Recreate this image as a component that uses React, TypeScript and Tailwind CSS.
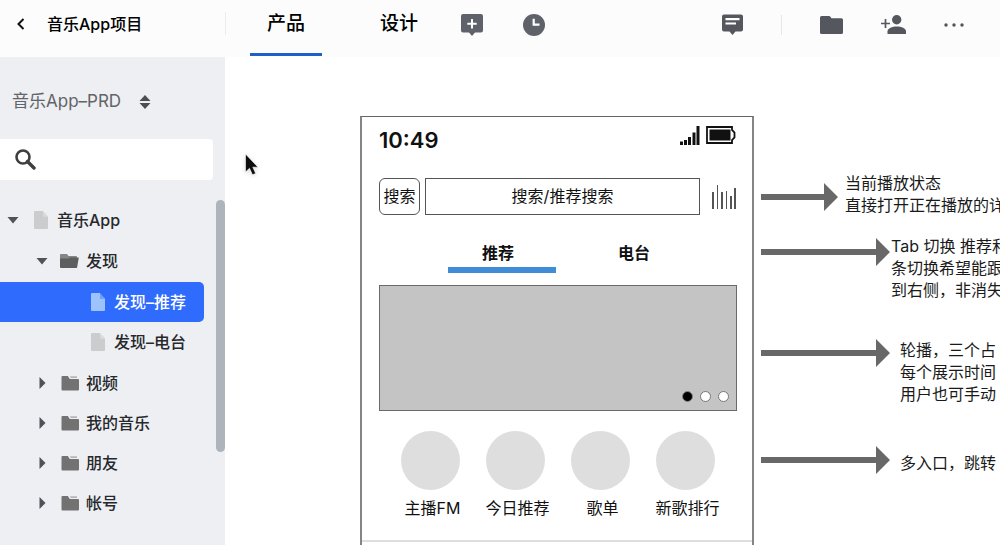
import React from "react";

type IconProps = { className?: string };

const FileIcon = ({ className }: IconProps) => (
  <svg viewBox="0 0 14 18" className={className} aria-hidden="true">
    <path d="M1 0h8v5.500h5V17a1 1 0 0 1-1 1H1a1 1 0 0 1-1-1V1a1 1 0 0 1 1-1z" fill="currentColor" />
    <path d="M9 0l5 5.500H9z" fill="currentColor" opacity="0.6" />
  </svg>
);

const FolderIcon = ({ className }: IconProps) => (
  <svg viewBox="0 0 18 16" className={className} aria-hidden="true">
    <path d="M1.500 1h5.300l2 3H17a1 1 0 0 1 1 1v9.500a1 1 0 0 1-1 1H1.500a1 1 0 0 1-1-1V2a1 1 0 0 1 1-1z" fill="#727272" />
    <path d="M8.800 1.200H16V3H9.800z" fill="#b5b6b8" />
  </svg>
);

const OpenFolderIcon = ({ className }: IconProps) => (
  <svg viewBox="0 0 19 16" className={className} aria-hidden="true">
    <path d="M1 1h6l1.500 2H16a1 1 0 0 1 1 1v6H0V2a1 1 0 0 1 1-1z" fill="#858585" />
    <path d="M0 5.500h8.500L10 4.500h8.800L17.200 14a1 1 0 0 1-1 .9H1a1 1 0 0 1-1-1z" fill="#5e5e5e" />
  </svg>
);

const Caret = ({ open }: { open: boolean }) => (
  <svg viewBox="0 0 12 12" className="size-3 shrink-0" aria-hidden="true">
    <path d={open ? "M.5 3h11L6 9.500z" : "M3.500 0v12L9.500 6z"} fill="#4f5256" />
  </svg>
);

type Node = { label: string; kind: "file" | "folder"; active?: boolean; open?: boolean; children?: Node[] };

const tree: Node[] = [
  {
    label: "音乐App",
    kind: "file",
    open: true,
    children: [
      {
        label: "发现",
        kind: "folder",
        open: true,
        children: [
          { label: "发现–推荐", kind: "file", active: true },
          { label: "发现–电台", kind: "file" },
        ],
      },
      { label: "视频", kind: "folder" },
      { label: "我的音乐", kind: "folder" },
      { label: "朋友", kind: "folder" },
      { label: "帐号", kind: "folder" },
    ],
  },
];

const indents = ["pl-[7px]", "pl-9", "pl-16"];

function Branch({ nodes, depth }: { nodes: Node[]; depth: number }) {
  return (
    <ul className={depth > 0 ? "my-px" : ""}>
      {nodes.map((n) => (
        <li key={n.label}>
          <button
            type="button"
            className={`flex h-10 w-full items-center rounded-r-[5px] text-left font-medium ${indents[depth]} ${
              n.active ? "bg-[#2f6bfd] text-white" : "text-[#26282c]"
            }`}
          >
            {depth < 2 ? <Caret open={!!n.open} /> : <span className="w-3" />}
            <span className="ml-3 mr-[7px] flex w-[19px] shrink-0 justify-center">
              {n.kind === "file" ? (
                <FileIcon className={n.active ? "h-[18px] w-3.5 text-[#9cc3fb]" : "h-[18px] w-3.5 text-[#cbcccd]"} />
              ) : n.open ? (
                <OpenFolderIcon className="h-4 w-[19px]" />
              ) : (
                <FolderIcon className="h-4 w-[18px]" />
              )}
            </span>
            <span className="whitespace-nowrap">{n.label}</span>
          </button>
          {n.children && <Branch nodes={n.children} depth={depth + 1} />}
        </li>
      ))}
    </ul>
  );
}

function Header() {
  return (
    <header className="flex h-[57px] shrink-0 items-center bg-[#fcfcfc]">
      <div className="mb-2.5 flex h-[23px] w-[226px] shrink-0 items-center border-r border-[#ececec]">
        <button type="button" aria-label="返回" className="ml-4 flex w-[31px]">
          <svg viewBox="0 0 10 12" className="h-3 w-2.5" aria-hidden="true">
            <path d="M7.500 1L2.500 6l5 5" fill="none" stroke="#111" strokeWidth="2" />
          </svg>
        </button>
        <h1 className="font-medium text-black">音乐App项目</h1>
      </div>
      <nav className="ml-6 flex items-stretch self-stretch text-[19px] font-medium text-black">
        <a href="#product" className="mb-px flex w-[72px] items-center justify-center border-b-[3px] border-[#1f5fc9] pb-1">
          产品
        </a>
        <a href="#design" className="mb-px ml-[41px] flex w-[72px] items-center justify-center border-b-[3px] border-transparent pb-1">
          设计
        </a>
      </nav>
      <div className="mb-2 ml-[26px] flex items-center gap-10">
        <button type="button" aria-label="添加批注">
          <svg viewBox="0 0 22 22" className="size-[22px]" aria-hidden="true">
            <path d="M2 0h18a2 2 0 0 1 2 2v14.500a2 2 0 0 1-2 2h-6L11 22l-3-3.500H2a2 2 0 0 1-2-2V2a2 2 0 0 1 2-2z" fill="#5f626b" />
            <path d="M11 5v9.400M6.300 9.700h9.400" stroke="#fff" strokeWidth="2" />
          </svg>
        </button>
        <button type="button" aria-label="历史记录">
          <svg viewBox="0 0 22 22" className="size-[22px]" aria-hidden="true">
            <circle cx="11" cy="11" r="11" fill="#5f626b" />
            <path d="M10.700 4.800v5.900h5.800" fill="none" stroke="#fff" strokeWidth="2.200" />
          </svg>
        </button>
      </div>
      <div className="mb-2 ml-auto flex items-center gap-[38px] pr-9">
        <button type="button" aria-label="评论">
          <svg viewBox="0 0 21 21" className="size-[21px]" aria-hidden="true">
            <path d="M2 .5h17a2 2 0 0 1 2 2V15.500a2 2 0 0 1-2 2h-5.500L10.500 21l-3-3.500H2a2 2 0 0 1-2-2v-13a2 2 0 0 1 2-2z" fill="#54585e" />
            <path d="M3.500 5.200h14M3.500 9.500h10.500" stroke="#fff" strokeWidth="2.200" />
          </svg>
        </button>
        <span className="h-5 w-px bg-[#e6e6e6]" />
        <button type="button" aria-label="文件夹">
          <svg viewBox="0 0 23 18" className="h-[18px] w-[23px]" aria-hidden="true">
            <path d="M1.500 0h7.500q1 0 1.600.9l.9 1.300H21.500A1.500 1.500 0 0 1 23 3.700v12.800a1.500 1.500 0 0 1-1.500 1.500h-20A1.500 1.500 0 0 1 0 16.500v-15A1.500 1.500 0 0 1 1.500 0z" fill="#54585e" />
          </svg>
        </button>
        <button type="button" aria-label="添加成员">
          <svg viewBox="0 0 25 19" className="h-[19px] w-[25px]" aria-hidden="true">
            <circle cx="15.700" cy="4.700" r="4.700" fill="#54585e" />
            <path d="M6.500 19v-2.500c0-3.200 4.700-5 9.300-5s9.200 1.800 9.200 5V19z" fill="#54585e" />
            <path d="M4.500 4v9M0 8.500h9" stroke="#54585e" strokeWidth="1.700" />
          </svg>
        </button>
        <button type="button" aria-label="更多">
          <svg viewBox="0 0 20 6" className="h-1.5 w-5" aria-hidden="true">
            <g fill="#505357">
              <circle cx="2" cy="3" r="1.700" />
              <circle cx="10" cy="3" r="1.700" />
              <circle cx="18" cy="3" r="1.700" />
            </g>
          </svg>
        </button>
      </div>
    </header>
  );
}

function Sidebar() {
  return (
    <aside className="flex w-[225px] shrink-0 flex-col bg-[#edeff2]">
      <label className="mt-[29px] ml-3 grid h-8 w-[139px] items-center">
        <span className="sr-only">文档</span>
        <select className="col-start-1 row-start-1 h-8 appearance-none bg-transparent text-[17px] text-[#626468]">
          <option>音乐App–PRD</option>
        </select>
        <svg viewBox="0 0 12 14" className="pointer-events-none col-start-1 row-start-1 h-3.5 w-3 justify-self-end" aria-hidden="true">
          <path d="M6 0l5.500 6H.5zM6 14l5.500-6H.5z" fill="#4b4e52" />
        </svg>
      </label>
      <label className="mt-[21px] mr-3 flex h-[41px] items-center rounded-r-[4px] bg-white pl-[15px]">
        <svg viewBox="0 0 21 21" className="size-[21px] shrink-0" aria-hidden="true">
          <circle cx="8" cy="8" r="6.500" fill="none" stroke="#3f3f3f" strokeWidth="2.600" />
          <path d="M12.500 12.500l6.500 6.500" stroke="#3f3f3f" strokeWidth="3.400" strokeLinecap="round" />
        </svg>
        <input type="search" aria-label="搜索页面" className="min-w-0 flex-1 bg-transparent px-2 outline-none" />
      </label>
      <div className="mt-5 flex">
        <nav className="min-w-0 flex-1">
          <Branch nodes={tree} depth={0} />
        </nav>
        <div className="ml-3 h-[252px] w-[9px] rounded-full bg-[#adb4bb]" />
      </div>
    </aside>
  );
}

const entries = ["主播FM", "今日推荐", "歌单", "新歌排行"];

function PhoneFrame() {
  return (
    <section className="absolute left-[135px] top-[59px] flex h-[640px] w-[394px] flex-col border-x-2 border-t border-x-[#858585] border-t-[#666] bg-white text-[#111]">
      <div className="flex flex-col pl-[17px] pr-[15px]">
        <div className="mt-[9px] flex h-7 items-start justify-between">
          <span className="text-[22px] leading-7 font-semibold">10:49</span>
          <div className="flex items-start gap-1.5 pr-px">
            <svg viewBox="0 0 20 19" className="h-[19px] w-5" aria-hidden="true">
              <path d="M0 15.500h3V19H0zM4 14h3v5H4zM8 11h3v8H8zM12.500 6.500h3V19h-3zM16.500 0h3v19h-3z" fill="#111" />
            </svg>
            <svg viewBox="0 0 30 18" className="h-[18px] w-[30px]" aria-hidden="true">
              <path d="M1 1h25v3l2.500 2.500v5L26 14v3H1z" fill="#fff" stroke="#111" strokeWidth="1.800" />
              <path d="M3.500 3.500h21v11h-21z" fill="#111" />
            </svg>
          </div>
        </div>
        <div className="mt-6 flex h-[37px] items-stretch">
          <button type="button" className="w-[41px] rounded-[6px] border border-[#555] pb-0.5">
            搜索
          </button>
          <button type="button" className="ml-[5px] flex-1 border border-[#555] pb-0.5">
            搜索/推荐搜索
          </button>
          <svg viewBox="0 0 26 26" className="ml-[11px] h-[26px] w-[26px] self-center" aria-hidden="true">
            <path d="M2 8v17M11 8v17M20 12v13M24 4v21" stroke="#555" strokeWidth="2" />
            <path d="M6.500 1v24M15.500 7v18" stroke="#555" strokeWidth="1" />
          </svg>
        </div>
        <div className="mt-[26px] ml-[69px] flex gap-7 font-semibold">
          <button type="button" className="h-8 w-[108px] border-b-[6px] border-[#418cd6] pr-2 pb-0.5">
            推荐
          </button>
          <button type="button" className="h-8 w-[108px] border-b-[6px] border-transparent pr-2 pb-0.5">
            电台
          </button>
        </div>
        <div className="mt-3 flex h-[126px] items-end justify-end gap-[7px] border border-[#6a6a6a] bg-[#c4c4c4] pr-[7px] pb-2">
          <span className="size-[11px] rounded-full border border-[#888] bg-black" />
          <span className="size-[11px] rounded-full border border-[#777] bg-white" />
          <span className="size-[11px] rounded-full border border-[#777] bg-white" />
        </div>
        <div className="mt-5 ml-[9px] grid w-[340px] grid-cols-4">
          {entries.map((e) => (
            <a key={e} href="#entry" className="flex flex-col items-center gap-1.5 whitespace-nowrap">
              <span className="size-[59px] rounded-full bg-[#dedede]" />
              <span className="pl-1">{e}</span>
            </a>
          ))}
        </div>
      </div>
      <hr className="mt-5 border-t-2 border-[#dedede]" />
    </section>
  );
}

const Arrow = ({ length, className }: { length: number; className: string }) => (
  <svg width={length} height="28" viewBox={`0 0 ${length} 28`} className={`absolute left-[536px] ${className}`} aria-hidden="true">
    <path d={`M0 11h${length - 14}V0l14 14-14 14V17H0z`} fill="#686868" />
  </svg>
);

function Canvas() {
  return (
    <main className="relative min-w-0 flex-1 overflow-hidden bg-white">
      <PhoneFrame />
      <Arrow length={77} className="top-[126px]" />
      <Arrow length={129} className="top-[181px]" />
      <Arrow length={129} className="top-[282px]" />
      <Arrow length={129} className="top-[389px]" />
      <div className="whitespace-nowrap text-[16px] leading-[22px] text-[#1a1a1a]">
        <p className="absolute left-[620px] top-[115px]">
          当前播放状态
          <br />
          直接打开正在播放的详
        </p>
        <p className="absolute left-[666px] top-[178px]">
          Tab 切换 推荐和
          <br />
          条切换希望能跟
          <br />
          到右侧，非消失
        </p>
        <p className="absolute left-[675px] top-[282px]">
          轮播，三个占
          <br />
          每个展示时间
          <br />
          用户也可手动
        </p>
        <p className="absolute left-[675px] top-[395px]">多入口，跳转</p>
      </div>
      <svg viewBox="0 0 14 24" className="pointer-events-none absolute left-5 top-[97px] h-6 w-3.5 drop-shadow-sm" aria-hidden="true">
        <path d="M.5 0v18l4-3.700 3 6.500 3.200-1.400-2.900-6.200h5.200z" fill="#0c0c0c" stroke="#fff" strokeWidth="0.600" />
      </svg>
    </main>
  );
}

export default function App() {
  return (
    <div className="flex h-screen flex-col overflow-hidden bg-white font-['Inter','Noto_Sans_CJK_SC',sans-serif] text-base">
      <Header />
      <div className="flex min-h-0 flex-1">
        <Sidebar />
        <Canvas />
      </div>
    </div>
  );
}
